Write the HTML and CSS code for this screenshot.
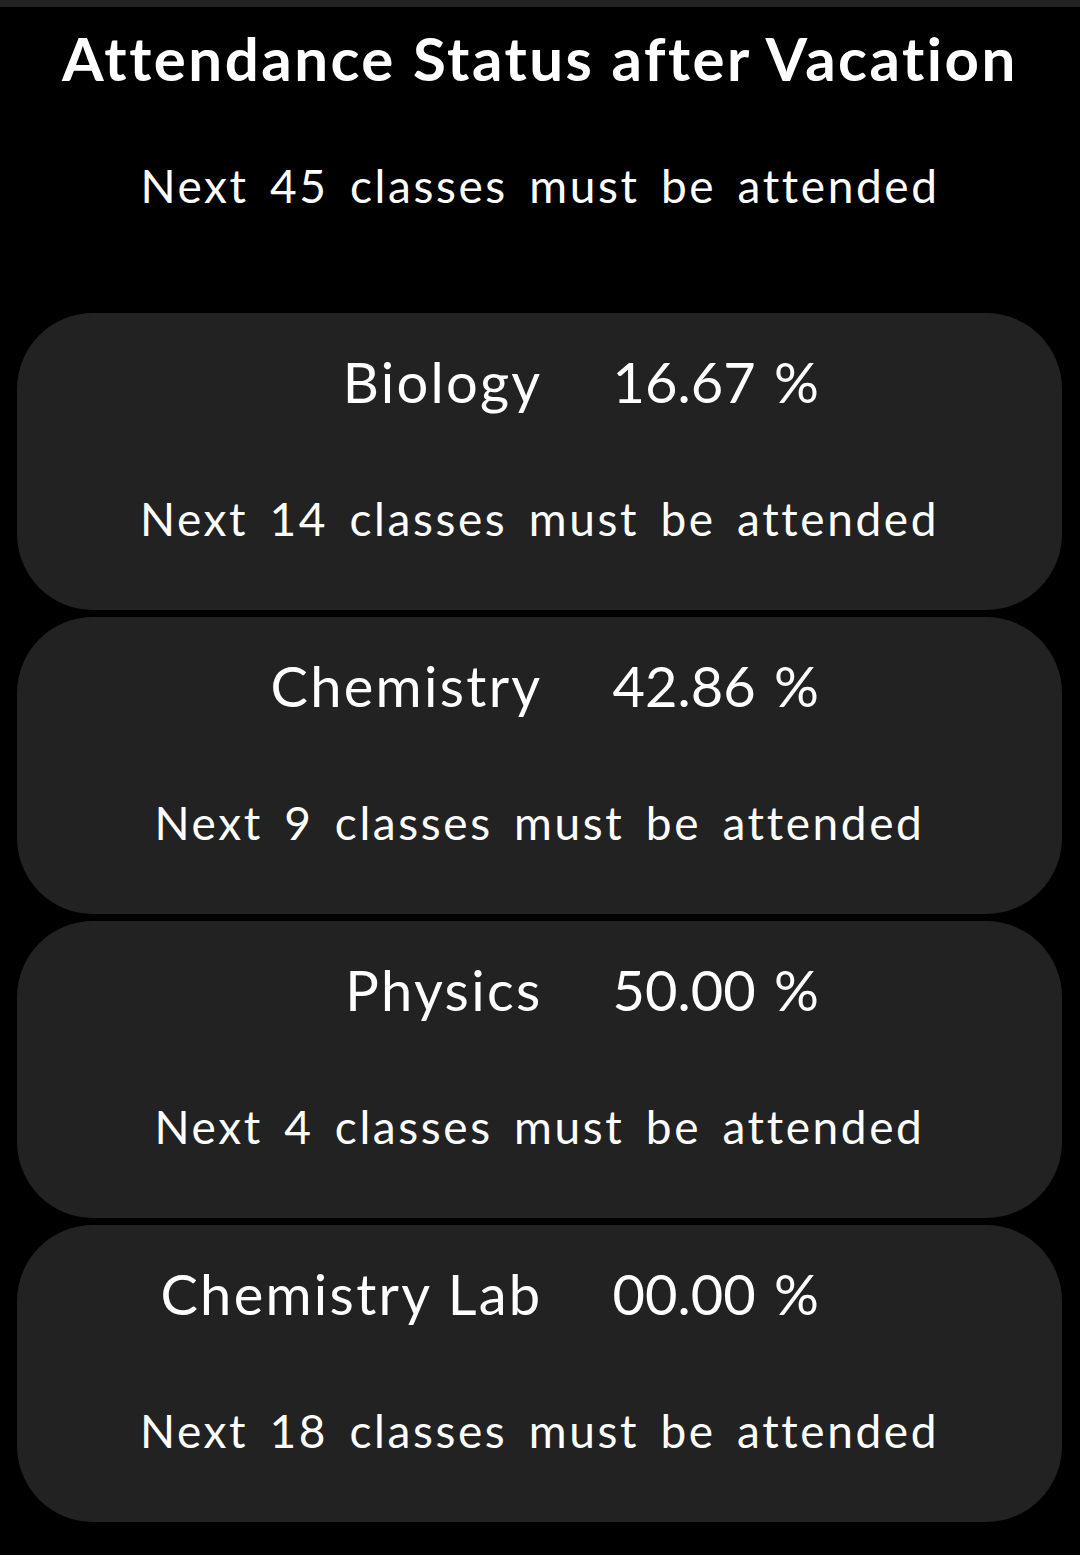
FILE: index.html
```html
<!DOCTYPE html>
<html>
<head>
<meta charset="utf-8">
<link rel="stylesheet" href="styles.css">
</head>
<body>
<div class="topbar"></div>
<h1 class="title">Attendance Status after Vacation</h1>
<p class="subtitle">Next 45 classes must be attended</p>
<div class="cards">
  <div class="card">
    <div class="row"><span class="subject">Biology</span><span class="pct">16.67 %</span></div>
    <p class="need">Next 14 classes must be attended</p>
  </div>
  <div class="card">
    <div class="row"><span class="subject">Chemistry</span><span class="pct">42.86 %</span></div>
    <p class="need">Next 9 classes must be attended</p>
  </div>
  <div class="card">
    <div class="row"><span class="subject">Physics</span><span class="pct">50.00 %</span></div>
    <p class="need">Next 4 classes must be attended</p>
  </div>
  <div class="card">
    <div class="row"><span class="subject">Chemistry Lab</span><span class="pct">00.00 %</span></div>
    <p class="need">Next 18 classes must be attended</p>
  </div>
</div>
</body>
</html>
```
FILE: styles.css
```css
html, body {
  margin: 0;
  padding: 0;
  background: #000;
  color: #fff;
  font-family: "Lato", "Noto Sans", sans-serif;
  font-variant-ligatures: none;
}
.topbar {
  height: 7px;
  background: #222222;
}
.title {
  margin: 15px 0 0;
  font-size: 60px;
  line-height: 72px;
  font-weight: 700;
  text-align: center;
  letter-spacing: 2.5px;
}
.subtitle {
  margin: 64px 0 0;
  font-size: 46px;
  line-height: 55px;
  text-align: center;
  letter-spacing: 2.6px;
  word-spacing: 7px;
}
.cards {
  margin-top: 100px;
  padding: 0 18px 0 17px;
  display: flex;
  flex-direction: column;
  gap: 7px;
}
.card {
  height: 297px;
  box-sizing: border-box;
  background: #222222;
  border-radius: 76px;
  padding-top: 35px;
}
.row {
  display: grid;
  grid-template-columns: 1fr 1fr;
  font-size: 56px;
  line-height: 67px;
}
.subject {
  text-align: right;
  letter-spacing: 2.3px;
  margin-right: -3px;
}
.pct {
  padding-left: 73px;
  word-spacing: 4px;
}
.need {
  margin: 76px 0 0;
  font-size: 46px;
  line-height: 55px;
  text-align: center;
  letter-spacing: 2.6px;
  word-spacing: 7px;
}
```
